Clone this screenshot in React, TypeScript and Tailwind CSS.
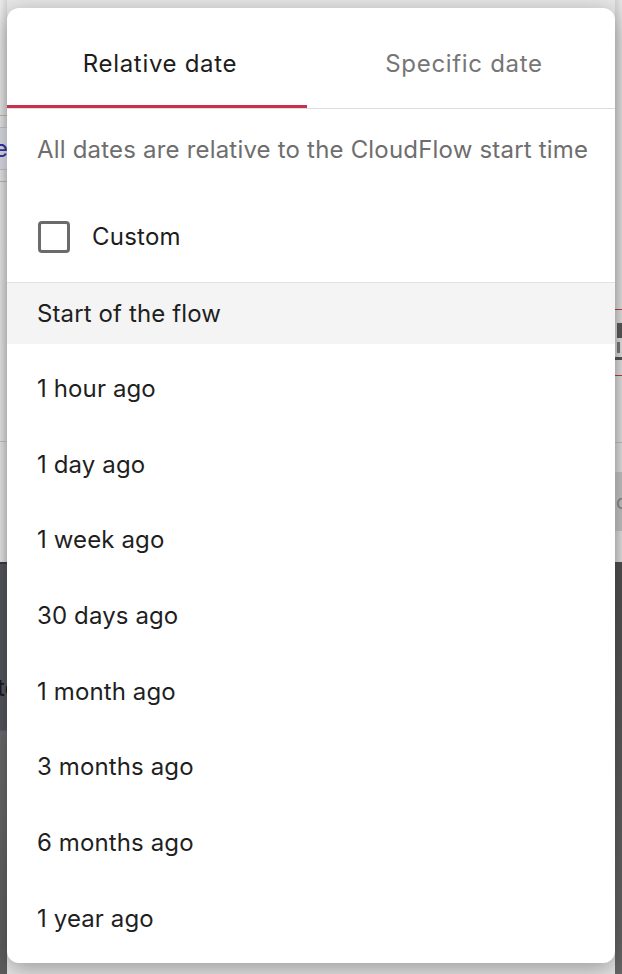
import React, { useState } from "react";

const OPTIONS = [
  "Start of the flow",
  "1 hour ago",
  "1 day ago",
  "1 week ago",
  "30 days ago",
  "1 month ago",
  "3 months ago",
  "6 months ago",
  "1 year ago",
];

// the page behind the popover, mostly hidden
const Backdrop: React.FC = () => (
  <div className="flex h-full w-full">
    <div className="flex w-[7px] flex-col overflow-hidden">
      <div className="h-[562px] bg-gradient-to-r from-[#ececec] to-[#d6d6d6]">
        <div className="h-[115px]" />
        <div className="h-px bg-[#b8b8b8]" />
        <div className="mt-[11px] flex h-[43px] items-center border-y border-[#c4c4dc] bg-[#dedee8]">
          <span className="-ml-[6px] text-[24px] leading-none text-[#3535a5]">e</span>
        </div>
        <div className="mt-[11px] h-px bg-[#b8b8b8]" />
        <div className="mt-[259px] h-px bg-[#c4c4c4]" />
      </div>
      <div className="h-[168px] border-t-2 border-[#3a3a4e] bg-[#56565e]">
        <div className="mt-[112px] -ml-[3px] text-[24px] leading-none text-[#1a1a1a]">te</div>
      </div>
      <div className="flex-1 border-t border-[#5c5c80] bg-gradient-to-b from-[#6c6c6c] to-[#5e5e5e]" />
    </div>
    <div className="flex-1" />
    <div className="flex w-[7px] flex-col overflow-hidden">
      <div className="h-[562px] bg-gradient-to-l from-[#e6e6e6] to-[#d2d2d2]">
        <div className="h-[309px]" />
        <div className="h-px bg-[#c23a3a]" />
        <div className="mt-[13px] ml-[2px] h-[15px] bg-[#5a5a5a]" />
        <div className="mt-[4px] ml-[2px] h-[11px] w-[3px] bg-[#777]" />
        <div className="mt-[4px] h-[3px] bg-[#555]" />
        <div className="mt-[15px] h-px bg-[#c23a3a]" />
        <div className="mt-[66px] h-px bg-[#bdbdbd]" />
        <div className="mt-[29px] flex h-[59px] items-center bg-[#c4c4c4]">
          <span className="ml-[1px] text-[20px] leading-none text-[#888]">d</span>
        </div>
      </div>
      <div className="flex-1 bg-gradient-to-b from-[#4f4f4f] to-[#676767]" />
    </div>
  </div>
);

export default function App() {
  const [tab, setTab] = useState<"relative" | "specific">("relative");
  const [custom, setCustom] = useState(false);
  const [selected, setSelected] = useState(0);

  return (
    <div
      className="relative h-[974px] w-[622px] overflow-hidden bg-[#e8e8e8]"
      style={{ fontFamily: "Inter, 'Noto Sans', sans-serif" }}
    >
      <Backdrop />

      <div className="absolute left-[7px] top-[8px] flex h-[955px] w-[608px] flex-col overflow-hidden rounded-[12px] bg-white shadow-[0_6px_24px_rgba(0,0,0,0.35)]">
        {/* tabs */}
        <div className="flex h-[101px] shrink-0 border-b border-[#dedede]">
          <button
            onClick={() => setTab("relative")}
            className={`relative flex w-[300px] items-center justify-center pl-[6px] pt-[12px] text-[24px] tracking-[0.02857em] ${
              tab === "relative" ? "text-[#1d1d1d]" : "text-[#767676]"
            }`}
          >
            Relative date
            {tab === "relative" && (
              <span className="absolute bottom-0 left-0 h-[3px] w-full bg-[#c8314f]" />
            )}
          </button>
          <button
            onClick={() => setTab("specific")}
            className={`relative flex flex-1 items-center justify-center pl-[6px] pt-[12px] text-[24px] tracking-[0.02857em] ${
              tab === "specific" ? "text-[#1d1d1d]" : "text-[#767676]"
            }`}
          >
            Specific date
            {tab === "specific" && (
              <span className="absolute bottom-0 left-0 h-[3px] w-full bg-[#c8314f]" />
            )}
          </button>
        </div>

        <p className="shrink-0 whitespace-nowrap px-[30px] pt-[26px] text-[24px] leading-[30px] tracking-[0.008em] text-[#6e6e6e]">
          All dates are relative to the CloudFlow start time
        </p>

        <label className="mt-[56px] flex shrink-0 cursor-pointer items-center gap-[22px] px-[31px] pb-[29px]">
          <span
            onClick={() => setCustom(!custom)}
            className={`h-[32px] w-[32px] rounded-[4px] border-[3px] border-[#6b6b6b] ${
              custom ? "bg-[#6b6b6b]" : "bg-white"
            }`}
          />
          <span className="text-[24px] leading-[32px] tracking-[0.00938em] text-[#1d1d1d]">Custom</span>
        </label>

        <ul className="flex shrink-0 flex-col gap-[14.625px] border-t border-[#e2e2e2]">
          {OPTIONS.map((o, i) => (
            <li
              key={o}
              onClick={() => setSelected(i)}
              className={`flex h-[61px] shrink-0 cursor-pointer items-center px-[30px] text-[24px] tracking-[0.005em] text-[#1f1f1f] ${
                selected === i ? "bg-[#f4f4f4]" : ""
              }`}
            >
              {o}
            </li>
          ))}
        </ul>
      </div>
    </div>
  );
}
